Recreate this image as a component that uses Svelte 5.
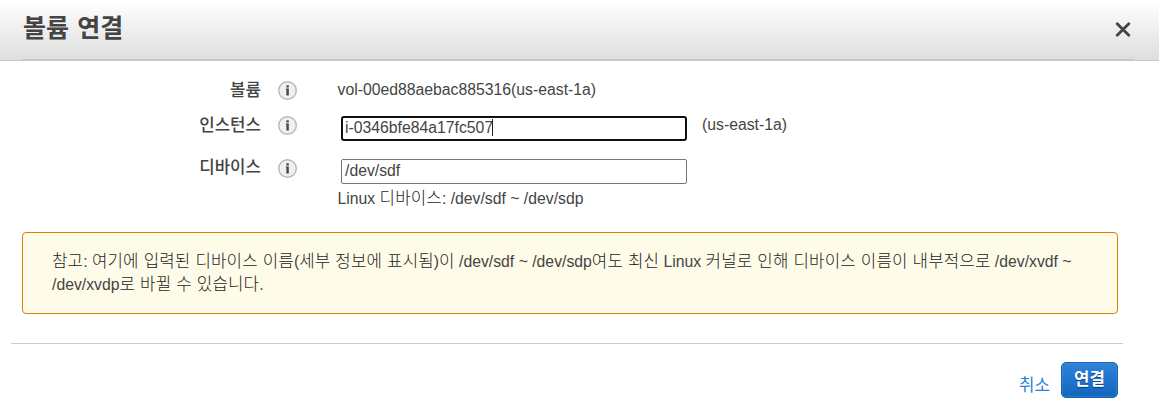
<script>
  const split = (text) => text.split(/([\uac00-\ud7a3]+(?: [\uac00-\ud7a3]+)*)/).filter(Boolean);
  const isHangul = (part) => /[\uac00-\ud7a3]/.test(part);
  const note =
    '참고: 여기에 입력된 디바이스 이름(세부 정보에 표시됨)이 /dev/sdf ~ /dev/sdp여도 최신 Linux 커널로 인해 디바이스 이름이 내부적으로 /dev/xvdf ~ /dev/xvdp로 바뀔 수 있습니다.';
</script>

{#snippet mixed(text)}{#each split(text) as part}{#if isHangul(part)}<span class="ko">{part}</span>{:else}{part}{/if}{/each}{/snippet}

{#snippet info()}
  <svg class="info" width="20" height="20" viewBox="0 0 20 20" aria-hidden="true">
    <circle cx="9.5" cy="10.5" r="8.8" fill="#f0f0f0" stroke="#b8b8b8" stroke-width="1.4" />
    <rect x="8.4" y="5.3" width="2.4" height="2.2" fill="#444" />
    <path d="M7.8 8.6h3v7H8.4V9.5h-.6z" fill="#444" />
  </svg>
{/snippet}

<div class="dialog">
  <header>
    <div class="head-inner">
      <h1>볼륨 연결</h1>
      <svg class="close" width="16" height="16" viewBox="0 0 16 16" aria-hidden="true">
        <path d="M2.2 1.7L13.8 13.3M13.8 1.7L2.2 13.3" stroke="#444" stroke-width="2.8" stroke-linecap="round" />
      </svg>
    </div>
  </header>

  <section class="form">
    <div class="row first">
      <div class="label">볼륨</div>
      {@render info()}
      <div class="value">vol-00ed88aebac885316(us-east-1a)</div>
    </div>
    <div class="row second">
      <div class="label">인스턴스</div>
      {@render info()}
      <div class="field focused">i-0346bfe84a17fc507<span class="caret"></span></div>
      <div class="zone">(us-east-1a)</div>
    </div>
    <div class="row third">
      <div class="label">디바이스</div>
      {@render info()}
      <div class="field">/dev/sdf</div>
    </div>
    <div class="hint">{@render mixed('Linux 디바이스: /dev/sdf ~ /dev/sdp')}</div>
  </section>

  <div class="note">{@render mixed(note)}</div>

  <footer>
    <a href="#cancel">취소</a>
    <button>연결</button>
  </footer>
</div>

<style>
  :global(body) {
    background: #fff;
  }
  .dialog {
    width: 1159px;
    height: 413px;
    overflow: hidden;
    box-sizing: border-box;
    color: #444;
    font: 15.77px/23px 'Liberation Sans', 'Noto Sans CJK KR', sans-serif;
  }
  .ko {
    font-family: 'Liberation Sans', 'Noto Sans CJK KR', sans-serif;
    color: #1c1c1c;
    font-size: 16.8px;
    font-weight: 300;
    line-height: 1;
    letter-spacing: 0.14px;
    word-spacing: 0.2px;
  }
  .label,
  h1,
  a,
  button {
    font-family: 'Noto Sans CJK KR', sans-serif;
  }
  header {
    height: 61px;
    box-sizing: border-box;
    padding: 0 25px 0 22px;
    border-bottom: 1px solid #c8c8c8;
    background: linear-gradient(#fff, #dedede);
  }
  .head-inner {
    height: 60px;
    box-sizing: border-box;
    display: flex;
    justify-content: space-between;
    align-items: flex-start;
    border-bottom: 1px solid #c8c8c8;
  }
  h1 {
    margin: 8px 0 0 1px;
    font-size: 25px;
    line-height: 36px;
    font-weight: 700;
    word-spacing: 2.5px;
  }
  .close {
    margin: 22px 3px 0 0;
  }
  .form {
    height: 171px;
    box-sizing: border-box;
    padding-top: 17px;
  }
  .row {
    display: flex;
    align-items: flex-start;
  }
  .first {
    height: 38px;
  }
  .second {
    height: 43px;
  }
  .third {
    height: 28px;
  }
  .label {
    width: 261px;
    text-align: right;
    font-size: 16.8px;
    font-weight: 500;
  }
  .info {
    margin: 2px 0 0 17px;
  }
  .second .label {
    margin-top: -3px;
  }
  .second .info {
    margin-top: -1px;
  }
  .third .label {
    margin-top: -4px;
  }
  .third .info {
    margin-top: -1px;
  }
  .value {
    margin-left: 39.5px;
  }
  .field {
    width: 346px;
    height: 25px;
    box-sizing: border-box;
    margin-left: 43px;
    padding-left: 3px;
    border: 1px solid #767676;
    border-radius: 2px;
    line-height: 22px;
    white-space: nowrap;
  }
  .focused {
    border: 2px solid #101010;
    padding-left: 2px;
    border-radius: 3px;
    line-height: 20px;
  }
  .caret {
    display: inline-block;
    width: 1px;
    height: 17px;
    margin-left: -1px;
    vertical-align: -3px;
    background: #222;
  }
  .zone {
    margin: -3px 0 0 15px;
  }
  .hint {
    padding-left: 337.5px;
  }
  .note {
    width: 1096px;
    height: 82px;
    box-sizing: border-box;
    margin-left: 22px;
    padding: 17px 29px;
    border: 1px solid #dd7d00;
    border-radius: 4px;
    background: #fffbe9;
  }
  footer {
    width: 1112px;
    box-sizing: border-box;
    margin: 29px 0 0 11px;
    padding: 18px 5px 0 0;
    border-top: 1px solid #ccc;
    display: flex;
    justify-content: flex-end;
  }
  a {
    margin: 11px 11px 0 0;
    color: #2a7fd8;
    font-size: 16.8px;
    text-decoration: none;
  }
  button {
    width: 57px;
    height: 36px;
    padding: 0 0 4px;
    border: 1px solid #1862b3;
    border-radius: 5px;
    background: linear-gradient(#2f83d9, #1265bd);
    box-shadow: inset 0 0 0 1px rgba(80, 155, 230, 0.35);
    color: #fff;
    font-size: 16.8px;
    font-weight: 700;
    text-shadow: 0 1px 1px #0a3f80;
  }
</style>
